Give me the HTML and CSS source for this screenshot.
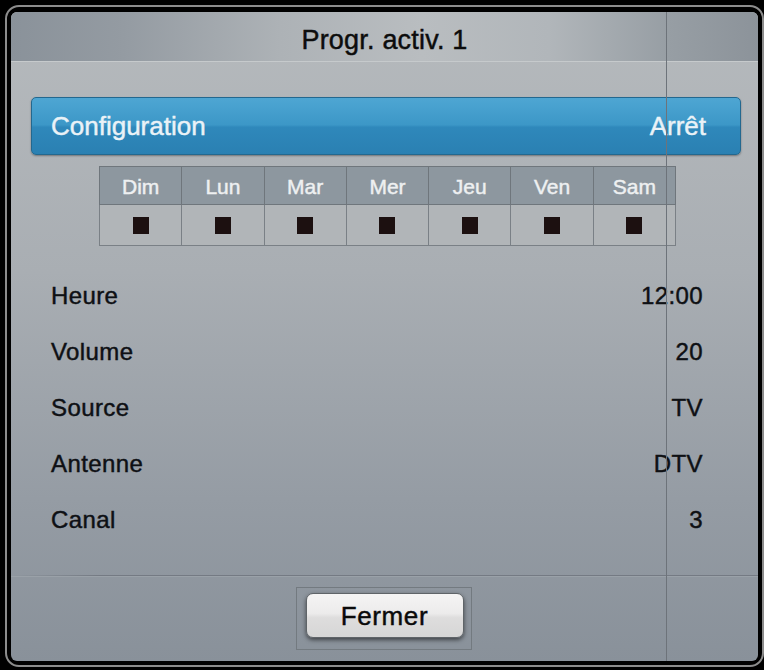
FILE: index.html
```html
<!DOCTYPE html>
<html lang="fr">
<head>
<meta charset="utf-8">
<title>Progr. activ. 1</title>
<link rel="stylesheet" href="styles.css">
</head>
<body>
<div class="frame">
  <div class="panel">
    <div class="vline"></div>
    <header class="title">Progr. activ. 1</header>
    <div class="config"><span>Configuration</span><span>Arrêt</span></div>
    <table class="days">
      <tr>
        <th>Dim</th><th>Lun</th><th>Mar</th><th>Mer</th><th>Jeu</th><th>Ven</th><th>Sam</th>
      </tr>
      <tr>
        <td><i class="box"></i></td><td><i class="box"></i></td><td><i class="box"></i></td><td><i class="box"></i></td><td><i class="box"></i></td><td><i class="box"></i></td><td><i class="box"></i></td>
      </tr>
    </table>
    <ul class="rows">
      <li><span>Heure</span><span>12:00</span></li>
      <li><span>Volume</span><span>20</span></li>
      <li><span>Source</span><span>TV</span></li>
      <li><span>Antenne</span><span>DTV</span></li>
      <li><span>Canal</span><span>3</span></li>
    </ul>
    <div class="sep"></div>
    <div class="actions">
      <div class="btnbox"><button class="btn">Fermer</button></div>
    </div>
  </div>
</div>
</body>
</html>
```

FILE: styles.css
```css
html, body {
  margin: 0;
  padding: 0;
  background: #000;
}
body {
  font-family: "Liberation Sans", Arial, Helvetica, sans-serif;
  width: 764px;
  height: 670px;
  overflow: hidden;
  -webkit-text-stroke: 0.45px currentColor;
}
.frame {
  box-sizing: border-box;
  margin: 5px 0 0 5px;
  width: 759px;
  height: 662px;
  border: 2px solid #8c8c8c;
  border-radius: 14px;
  padding: 5px 4px 4px 4px;
  background: #000;
}
.panel {
  position: relative;
  width: 747px;
  height: 649px;
  border-radius: 6px;
  overflow: hidden;
  background: linear-gradient(to bottom, #b6babd 0%, #a9aeb3 40%, #959ca4 75%, #89919a 100%);
  display: flex;
  flex-direction: column;
}
.vline {
  position: absolute;
  left: 655px;
  top: 0;
  bottom: 0;
  width: 1px;
  background: #6d737a;
}
.title {
  box-sizing: border-box;
  height: 50px;
  padding-top: 13px;
  line-height: 30px;
  font-size: 27px;
  letter-spacing: 0.2px;
  text-align: center;
  color: #0c0c0c;
  background: linear-gradient(to right, #8a929a 0%, #949ba2 15%, #adb2b6 36%, #b9bdc0 55%, #b1b6ba 72%, #979ea4 88%, #8c939a 100%);
  border-bottom: 1px solid #c6cacc;
}
.config {
  box-sizing: border-box;
  margin: 35px 17px 0 20px;
  height: 58px;
  border-radius: 5px;
  border: 1px solid #23688f;
  background: linear-gradient(to bottom, #4ea6d3 0%, #3c97c7 48%, #2f88bb 52%, #2a80b2 100%);
  box-shadow: 0 1px 2px rgba(0,0,0,0.35);
  display: flex;
  align-items: center;
  justify-content: space-between;
  padding: 0 34px 0 19px;
  font-size: 26px;
  color: #eaf2f7;
}
.days {
  margin: 11px 0 0 88px;
  width: 577px;
  border-collapse: collapse;
  table-layout: fixed;
  border: 1px solid #6f767c;
}
.days th {
  height: 38px;
  padding: 2px 0 0 0;
  box-sizing: border-box;
  background: #8d979f;
  color: #eef0f1;
  font-weight: normal;
  font-size: 21px;
  border: 1px solid #6f767c;
}
.days td {
  height: 41px;
  box-sizing: border-box;
  background: #b1b5b8;
  border: 1px solid #7a8086;
  text-align: center;
  vertical-align: middle;
  padding: 0;
}
.box {
  display: inline-block;
  width: 16px;
  height: 17px;
  background: #1c1010;
  vertical-align: middle;
}
.rows {
  list-style: none;
  margin: 22px 0 0 0;
  padding: 0 55px 0 40px;
}
.rows li {
  height: 56px;
  line-height: 56px;
  display: flex;
  justify-content: space-between;
  font-size: 24px;
  letter-spacing: 0.4px;
  color: #0e1014;
}
.sep {
  margin-top: 27px;
  height: 1px;
  background: linear-gradient(to right, rgba(110,117,125,0) 0%, #747a83 12%, #747a83 100%);
  border-bottom: 1px solid #9aa1a8;
}
.actions {
  display: flex;
  justify-content: center;
  margin-top: 10px;
  padding-right: 2px;
}
.btnbox {
  border: 1px solid #737a80;
  padding: 5px 7px 11px 9px;
}
.btn {
  display: block;
  box-sizing: border-box;
  width: 158px;
  height: 45px;
  padding: 2px 0 0 0;
  border: 1px solid #5f6468;
  border-radius: 7px;
  background: linear-gradient(to bottom, #f5f4f4 0%, #ecebeb 45%, #dedddd 55%, #d6d6d6 100%);
  box-shadow: 0 2px 4px rgba(0,0,0,0.55);
  font-family: "Liberation Sans", Arial, Helvetica, sans-serif;
  font-size: 26px;
  letter-spacing: 0.6px;
  color: #0a0a0a;
  -webkit-text-stroke: 0.45px currentColor;
}
```
